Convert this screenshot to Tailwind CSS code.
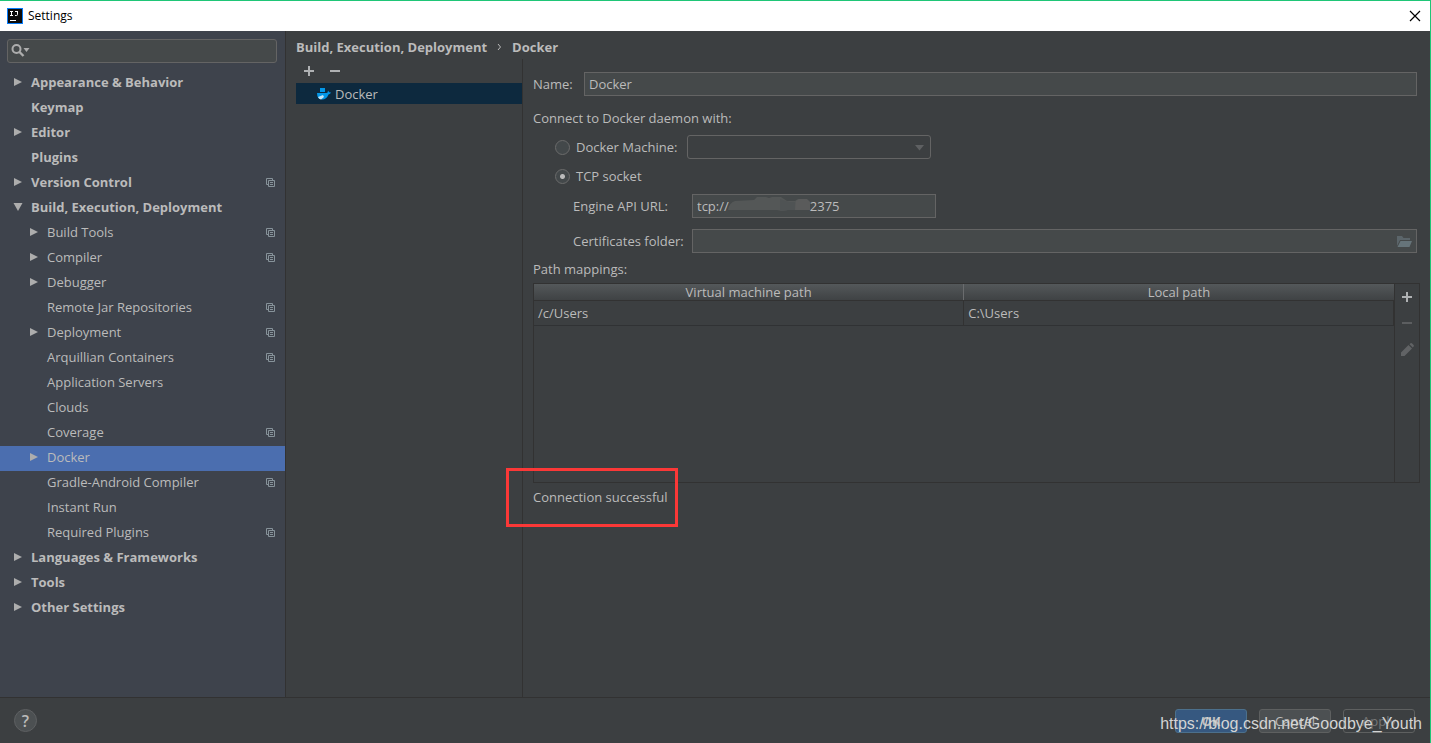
<!DOCTYPE html>
<html lang="en">

<head>
    <meta charset="UTF-8">
    <meta name="viewport" content="width=device-width, initial-scale=1.0">
    <title>Settings</title>
    <script src="https://cdn.jsdelivr.net/npm/@tailwindcss/browser@4"></script>
</head>

<body class="bg-[#3c3f41]">
    <!-- Icons -->
    <svg class="hidden">
        <symbol id="arrow-right" viewBox="0 0 10 10"><path d="M1 1v8l8-4z" fill="#adadad" /></symbol>
        <symbol id="arrow-down" viewBox="0 0 10 10"><path d="M0.5 1h9L5 9z" fill="#adadad" /></symbol>
        <symbol id="copy" viewBox="0 0 9 9">
            <path d="M2 6.500H0.500v-6h6V2M2.500 2.500h6v6h-6zM4 4.500h3M4 6.500h3" fill="none" stroke="#87939a" />
        </symbol>
        <symbol id="plus" viewBox="0 0 10 10"><path d="M4 0h2v4h4v2H6v4H4V6H0V4h4z" fill="currentColor" /></symbol>
        <symbol id="minus" viewBox="0 0 10 10"><path d="M0 4h10v2H0z" fill="currentColor" /></symbol>
    </svg>

    <div class="flex h-screen flex-col border-t border-r border-[#1fc677] font-['Open_Sans',sans-serif] text-[13px] leading-5 text-[#bbbbbb]">
        <!-- Title bar -->
        <header class="flex h-[30px] shrink-0 items-center bg-white pr-2 pl-[7px] text-black">
            <svg class="mr-[5px] size-4" viewBox="0 0 16 16">
                <rect width="16" height="16" fill="#087cfa" />
                <rect x="1" y="1" width="14" height="14" fill="#0c0c0c" />
                <path d="M3 3.500h3M4.500 3v5M3 7.500h3M8 3.500h3M10.500 3v3.500q0 1-1 1H8" fill="none" stroke="#fff" />
                <path d="M3 12h6v1H3z" fill="#fff" />
            </svg>
            <h1 class="text-xs">Settings</h1>
            <button class="ml-auto" aria-label="Close">
                <svg class="size-[14px]" viewBox="0 0 14 14"><path d="M2 2l10 10M12 2L2 12" stroke="#000" stroke-width="1.200" /></svg>
            </button>
        </header>

        <div class="flex min-h-0 flex-1">
            <!-- Sidebar -->
            <aside class="w-[286px] shrink-0 border-r border-[#323232] bg-[#3e434c] pt-2">
                <div class="relative mr-2 ml-[7px]">
                    <input type="text" aria-label="Search settings"
                        class="block h-6 w-full rounded-[3px] border border-[#646464] bg-[#45494a] pl-8 outline-none">
                    <svg class="absolute top-1 left-1 h-4 w-5" viewBox="0 0 20 16">
                        <circle cx="5.500" cy="6" r="4" fill="none" stroke="#adadad" stroke-width="2" />
                        <path d="M8.500 9l4 4" stroke="#adadad" stroke-width="2.400" />
                        <path d="M12.500 5h6l-3 4z" fill="#adadad" />
                    </svg>
                </div>
                <nav class="mt-2">
                    <a href="#" class="flex h-[25px] items-center pr-[10px] pb-[3px] pl-[13px] font-bold"><svg class="mr-2 size-[10px]"><use href="#arrow-right" /></svg>Appearance &amp; Behavior</a>
                    <a href="#" class="flex h-[25px] items-center pr-[10px] pb-[3px] pl-[31px] font-bold">Keymap</a>
                    <a href="#" class="flex h-[25px] items-center pr-[10px] pb-[3px] pl-[13px] font-bold"><svg class="mr-2 size-[10px]"><use href="#arrow-right" /></svg>Editor</a>
                    <a href="#" class="flex h-[25px] items-center pr-[10px] pb-[3px] pl-[31px] font-bold">Plugins</a>
                    <a href="#" class="flex h-[25px] items-center pr-[10px] pb-[3px] pl-[13px] font-bold"><svg class="mr-2 size-[10px]"><use href="#arrow-right" /></svg>Version Control<svg class="ml-auto size-[9px]"><use href="#copy" /></svg></a>
                    <a href="#" class="flex h-[25px] items-center pr-[10px] pb-[3px] pl-[13px] font-bold"><svg class="mr-2 size-[10px]"><use href="#arrow-down" /></svg>Build, Execution, Deployment</a>
                    <a href="#" class="flex h-[25px] items-center pr-[10px] pb-[3px] pl-[29px]"><svg class="mr-2 size-[10px]"><use href="#arrow-right" /></svg>Build Tools<svg class="ml-auto size-[9px]"><use href="#copy" /></svg></a>
                    <a href="#" class="flex h-[25px] items-center pr-[10px] pb-[3px] pl-[29px]"><svg class="mr-2 size-[10px]"><use href="#arrow-right" /></svg>Compiler<svg class="ml-auto size-[9px]"><use href="#copy" /></svg></a>
                    <a href="#" class="flex h-[25px] items-center pr-[10px] pb-[3px] pl-[29px]"><svg class="mr-2 size-[10px]"><use href="#arrow-right" /></svg>Debugger</a>
                    <a href="#" class="flex h-[25px] items-center pr-[10px] pb-[3px] pl-[47px]">Remote Jar Repositories<svg class="ml-auto size-[9px]"><use href="#copy" /></svg></a>
                    <a href="#" class="flex h-[25px] items-center pr-[10px] pb-[3px] pl-[29px]"><svg class="mr-2 size-[10px]"><use href="#arrow-right" /></svg>Deployment<svg class="ml-auto size-[9px]"><use href="#copy" /></svg></a>
                    <a href="#" class="flex h-[25px] items-center pr-[10px] pb-[3px] pl-[47px]">Arquillian Containers<svg class="ml-auto size-[9px]"><use href="#copy" /></svg></a>
                    <a href="#" class="flex h-[25px] items-center pr-[10px] pb-[3px] pl-[47px]">Application Servers</a>
                    <a href="#" class="flex h-[25px] items-center pr-[10px] pb-[3px] pl-[47px]">Clouds</a>
                    <a href="#" class="flex h-[25px] items-center pr-[10px] pb-[3px] pl-[47px]">Coverage<svg class="ml-auto size-[9px]"><use href="#copy" /></svg></a>
                    <a href="#" class="flex h-[25px] items-center bg-[#4b6eaf] pr-[10px] pb-[3px] pl-[29px]"><svg class="mr-2 size-[10px]"><use href="#arrow-right" /></svg>Docker</a>
                    <a href="#" class="flex h-[25px] items-center pr-[10px] pb-[3px] pl-[47px]">Gradle-Android Compiler<svg class="ml-auto size-[9px]"><use href="#copy" /></svg></a>
                    <a href="#" class="flex h-[25px] items-center pr-[10px] pb-[3px] pl-[47px]">Instant Run</a>
                    <a href="#" class="flex h-[25px] items-center pr-[10px] pb-[3px] pl-[47px]">Required Plugins<svg class="ml-auto size-[9px]"><use href="#copy" /></svg></a>
                    <a href="#" class="flex h-[25px] items-center pr-[10px] pb-[3px] pl-[13px] font-bold"><svg class="mr-2 size-[10px]"><use href="#arrow-right" /></svg>Languages &amp; Frameworks</a>
                    <a href="#" class="flex h-[25px] items-center pr-[10px] pb-[3px] pl-[13px] font-bold"><svg class="mr-2 size-[10px]"><use href="#arrow-right" /></svg>Tools</a>
                    <a href="#" class="flex h-[25px] items-center pr-[10px] pb-[3px] pl-[13px] font-bold"><svg class="mr-2 size-[10px]"><use href="#arrow-right" /></svg>Other Settings</a>
                </nav>
            </aside>

            <main class="flex min-w-0 flex-1 flex-col pl-[10px]">
                <!-- Breadcrumb -->
                <h2 class="flex h-7 shrink-0 items-center pt-1 font-bold">
                    Build, Execution, Deployment
                    <svg class="mx-[10px] h-2 w-[5px]" viewBox="0 0 5 8"><path d="M1 1l2.500 3L1 7" fill="none" stroke="#bbb" /></svg>
                    Docker
                </h2>

                <div class="flex min-h-0 flex-1">
                    <!-- Server list -->
                    <section class="w-[227px] shrink-0 border-r border-[#323232]">
                        <div class="flex h-6 items-center gap-4 pl-2 text-[#afb1b3]">
                            <button aria-label="Add"><svg class="size-[10px]"><use href="#plus" /></svg></button>
                            <button aria-label="Remove"><svg class="size-[10px]"><use href="#minus" /></svg></button>
                        </div>
                        <a href="#" class="flex h-[21px] items-center bg-[#0d293e] pl-[21px]">
                            <svg class="mr-1 h-[13px] w-[14px]" viewBox="0 0 14 13">
                                <path d="M3 1h5v4H3z" fill="#0397e8" />
                                <path d="M0 6h9.500q1.500 0 1.500-2.500l1.200 1.700 1.800.3q-.6 1.800-2.500 1.900Q9.500 12.500 5 12.500 0 12.500 0 6z" fill="#0397e8" />
                                <path d="M1 10l5-2 1 2-3 2.500q-2-.5-3-2.500z" fill="#c4e4f5" />
                            </svg>
                            Docker
                        </a>
                    </section>

                    <!-- Server form -->
                    <form class="min-w-0 flex-1 pt-[13px] pr-[10px] pl-[10px]">
                        <div class="mr-[3px] flex items-center">
                            <label for="name" class="w-[51px]">Name:</label>
                            <input type="text" id="name" value="Docker"
                                class="h-6 min-w-0 flex-1 border border-[#646464] bg-[#45494a] px-1 outline-none">
                        </div>

                        <p class="mt-3">Connect to Docker daemon with:</p>
                        <div class="mt-[7px] flex items-center pl-[22px]">
                            <input type="radio" id="machine" name="daemon"
                                class="mr-[6px] size-[15px] appearance-none rounded-full border border-[#6b6b6b] bg-[#43484a] checked:bg-[radial-gradient(#bbbbbb_2px,transparent_3px)]">
                            <label for="machine" class="w-[111px]">Docker Machine:</label>
                            <div class="relative">
                                <select aria-label="Docker Machine" class="block h-6 w-[244px] appearance-none rounded-[3px] border border-[#646464] px-1 outline-none">
                                    <option></option>
                                </select>
                                <svg class="pointer-events-none absolute top-[10px] right-[7px] h-[6px] w-[9px]" viewBox="0 0 9 6"><path d="M0 0h9L4.500 5.500z" fill="#5e6062" /></svg>
                            </div>
                        </div>
                        <div class="mt-[7px] flex items-center pl-[22px]">
                            <input type="radio" id="tcp" name="daemon" checked
                                class="mr-[6px] size-[15px] appearance-none rounded-full border border-[#6b6b6b] bg-[#43484a] checked:bg-[radial-gradient(#bbbbbb_2px,transparent_3px)]">
                            <label for="tcp">TCP socket</label>
                        </div>
                        <div class="mt-2 flex items-center pl-10">
                            <label for="url" class="w-[119px]">Engine API URL:</label>
                            <div class="relative">
                                <input type="text" id="url" value="tcp://                        2375"
                                    class="block h-6 w-[244px] border border-[#646464] bg-[#45494a] px-1 outline-none">
                                <svg class="absolute top-[3px] left-9 h-[14px] w-[82px]" viewBox="0 0 82 14">
                                    <path d="M0 13q1-7 7-9l19-1 3-3h9l3 1 3-1h9l6 4 8 0 3-2h8l4 3v8H60l-6 1-5-1z" fill="#545757" />
                                    <path d="M52 2l9 3h6v8h-7l-6 1-2-1z" fill="#4f5354" />
                                    <path d="M68 4l3-2h8l3 3v8H67z" fill="#5a5b5b" />
                                </svg>
                            </div>
                        </div>
                        <div class="mt-[11px] mr-[3px] flex items-center pl-10">
                            <label for="certs" class="w-[119px]">Certificates folder:</label>
                            <div class="relative min-w-0 flex-1">
                                <input type="text" id="certs"
                                    class="block h-6 w-full border border-[#646464] bg-[#45494a] pr-7 pl-1 outline-none">
                                <button type="button" aria-label="Browse" class="absolute top-[6px] right-[5px]">
                                    <svg class="block h-3 w-[15px]" viewBox="0 0 15 12">
                                        <path d="M0 1h5l1.500 2H13v2H3L0 11z" fill="#5b656a" />
                                        <path d="M3.500 6H15l-2.500 6H0.500z" fill="#66747a" />
                                    </svg>
                                </button>
                            </div>
                        </div>

                        <p class="mt-[6px]">Path mappings:</p>
                        <div class="mt-1 flex h-[200px] border border-[#323232]">
                            <div class="min-w-0 flex-1">
                                <table class="w-full table-fixed border-collapse">
                                    <thead>
                                        <tr class="h-4 bg-linear-to-b from-[#54585a] to-[#3e4143] leading-4">
                                            <th class="border-r border-b border-r-[#6a6c6e] border-b-[#323232] p-0 font-normal">Virtual machine path</th>
                                            <th class="border-b border-[#323232] p-0 font-normal">Local path</th>
                                        </tr>
                                    </thead>
                                    <tbody>
                                        <tr class="h-[25px] border-b border-[#303234]">
                                            <td class="border-r border-[#323232] px-1 py-0">/c/Users</td>
                                            <td class="border-r border-[#323232] px-1 py-0">C:\Users</td>
                                        </tr>
                                    </tbody>
                                </table>
                            </div>
                            <div class="flex w-[25px] flex-col items-center gap-3 border-l border-[#323232] pt-[6px]">
                                <button type="button" aria-label="Add mapping" class="flex size-[14px] items-center justify-center text-[#afb1b3]"><svg class="size-[10px]"><use href="#plus" /></svg></button>
                                <button type="button" aria-label="Remove mapping" class="flex size-[14px] items-center justify-center text-[#5c5e60]"><svg class="size-[10px]"><use href="#minus" /></svg></button>
                                <button type="button" aria-label="Edit mapping" class="flex size-[14px] items-center justify-center">
                                    <svg class="size-[13px]" viewBox="0 0 13 13"><path d="M0 13v-3.500L7.500 2 11 5.500 3.500 13zM8.500 1.200l1-.9q.8-.5 1.600.1l1.500 1.500q.6.800 0 1.600l-.9.900z" fill="#616365" /></svg>
                                </button>
                            </div>
                        </div>

                        <div class="relative mt-1 w-fit">
                            <output class="block">Connection successful</output>
                            <div class="absolute -top-[19px] -left-[27px] h-[59px] w-[172px] border-3 border-[#fb3837]"></div>
                        </div>
                    </form>
                </div>
            </main>
        </div>

        <!-- Footer -->
        <footer class="relative flex h-[46px] shrink-0 items-center gap-3 border-t border-[#323232] pr-[15px] pl-[14px]">
            <button aria-label="Help" class="mr-auto flex size-[23px] items-center justify-center rounded-full border border-[#5e6062] bg-[#4c5052] text-base font-semibold">?</button>
            <button class="h-6 w-[72px] rounded-[3px] border border-[#4c708c] bg-[#365880] font-bold">OK</button>
            <button class="h-6 w-[72px] rounded-[3px] border border-[#5e6060] bg-[#4c5052]">Cancel</button>
            <button class="h-6 w-[72px] rounded-[3px] border border-[#5e6060] text-[#777777]" disabled>Apply</button>
            <span class="pointer-events-none absolute right-2 bottom-[7px] font-['Liberation_Sans',sans-serif] text-base text-[#d3d4d4]">https://blog.csdn.net/Goodbye_Youth</span>
        </footer>
    </div>
</body>

</html>
